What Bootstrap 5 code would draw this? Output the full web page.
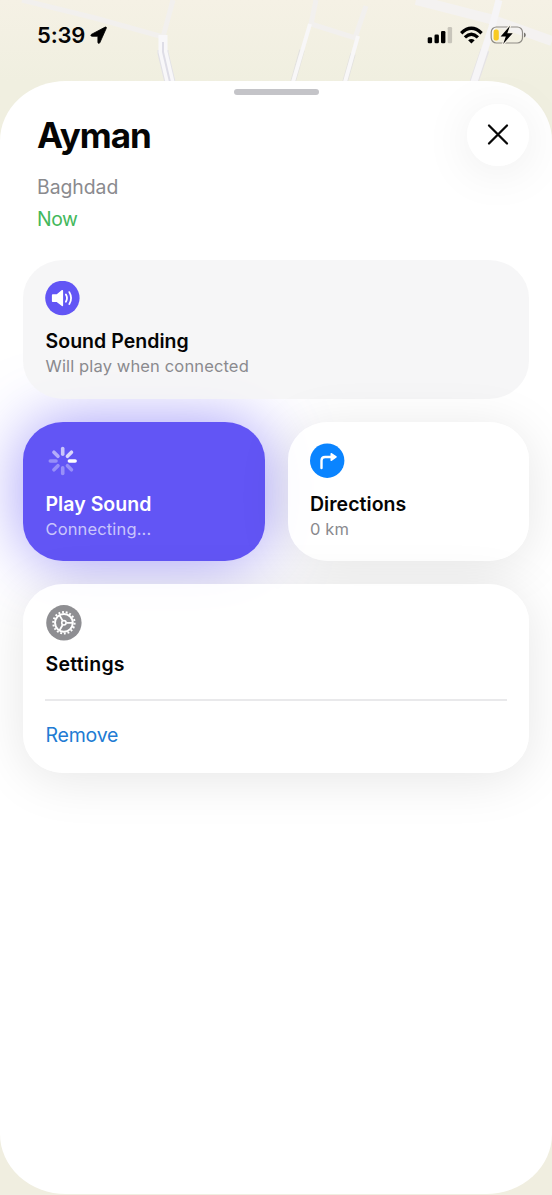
<!DOCTYPE html>
<html lang="en">
<head>
<meta charset="utf-8">
<meta name="viewport" content="width=device-width, initial-scale=1">
<title>Ayman</title>
<link href="https://cdn.jsdelivr.net/npm/bootstrap@5.3.0/dist/css/bootstrap.min.css" rel="stylesheet">
<style>
body{font-family:Inter,"Liberation Sans",sans-serif;color:#050505;background:#f0eee0;line-height:1.2}
.screen{height:1195px;background:linear-gradient(#f5f1e5,#f0efe0 81px,#f0eee0)}
.map{left:0;top:0}
.status{height:81px;padding:22px 26px 0 37px}
.clock{font-size:22px;line-height:27px;font-weight:600;letter-spacing:-.2px}
.sheet{height:1113px;border-radius:66px/60px;padding:8px 23px 0}
.grabber{width:85px;height:6px;background:#c4c4c8}
.heading{padding:9px 0 0 14px;height:165px}
.person{font-size:35px;line-height:42px;font-weight:700;letter-spacing:-1px;margin:10px 0 0}
.place,.seen{font-size:19.4px;line-height:24px;color:#8a8a8e}
.place{margin-top:19px;letter-spacing:-.05px}
.seen{margin-top:8px;color:#43b85c;letter-spacing:-.4px}
.round-x{width:62px;height:62px;background:rgba(255,255,255,.9);box-shadow:0 6px 50px rgba(0,0,0,.08)}
.tile{border:0;border-radius:40px/38px;padding:21px 22.5px 0;background:rgba(255,255,255,.86);box-shadow:0 6px 52px rgba(0,0,0,.1);z-index:1}
.tile svg{display:block;margin-left:-.5px}
.h-tile{height:139px}
.pending{background:rgba(245,245,246,.86);box-shadow:none}
.playing{background:#6255f5;box-shadow:0 0 64px rgba(98,85,245,.6);z-index:0}
.label{font-size:19.5px;line-height:24px;font-weight:600;margin-top:14px;letter-spacing:.04px}
.pending .label{margin-top:13px}
.sub{font-size:16.5px;line-height:22px;color:#8a8a8e;margin-top:2px;letter-spacing:.14px}
.playing .sub{color:#c9c5fb}
.settings{height:189px}
.settings svg{margin-left:0}
.settings .label{margin-top:11px;letter-spacing:.25px}
.rule{height:2px;background:#e9e9eb;margin:23px -.5px 22px}
.remove{font-size:19.5px;line-height:24px;color:#217bd3;letter-spacing:-.2px}
.gap-tiles{gap:23px}
</style>
</head>
<body>
<main class="screen position-relative overflow-hidden">
<svg class="map position-absolute" width="552" height="81" viewBox="0 0 552 81" fill="none" aria-hidden="true">
<g stroke="#f2f0ee" stroke-width="5"><path d="M22 0 95 18 163 37 173 0M316 0 311 24 355 38 366 6"/></g>
<path d="M163 50V53L170 82" stroke="#e2e1e6" stroke-width="11"/>
<path d="M163 35 163 52 170 82" stroke="#f8f7f9" stroke-width="9"/>
<path d="M163 42 163 52 170 82" stroke="#dedde6" stroke-width="2"/>
<g stroke="#e3e2df" stroke-width="5.5"><path d="M302 50 293 82M353 54 345 82"/></g>
<g stroke="#f8f7f8" stroke-width="4"><path d="M310 24 293 82M358 36 345 82"/></g>
<path d="M416 0 490 19 552 41" stroke="#f4f2f1" stroke-width="10"/>
<path d="M485 50 474 82" stroke="#e5e3e5" stroke-width="9"/>
<path d="M499 0 492 27 474 82" stroke="#f6f5f7" stroke-width="7"/>
</svg>
<header class="status position-relative d-flex justify-content-between align-items-start">
  <div class="d-flex"><span class="clock">5:39</span>
    <svg class="ms-1" width="20" height="27" viewBox="0 0 20 27"><path d="M17.3 6.2 10.9 20.6c-.5 1.2-2 1-2-.3v-6H3.1c-1.5 0-1.7-1.5-.4-2.1L16.2 5.1c.8-.4 1.5.2 1.1 1.1Z" stroke="#000" stroke-width=".8"/></svg>
  </div>
  <svg width="100" height="27" viewBox="426 22 100 27" aria-label="Signal, Wi-Fi, battery">
    <rect x="427.7" y="37.2" width="4.4" height="6" rx="1.3"/><rect x="434.5" y="34.5" width="4.4" height="8.7" rx="1.3"/><rect x="441" y="31" width="4.4" height="12.2" rx="1.3"/><rect x="447.7" y="27" width="4.4" height="16.2" rx="1.3" fill="#c8c5bb"/>
    <g fill="none" stroke="#000" stroke-width="3.3"><path d="M461.2 33.2Q471.4 23.4 481.6 33.2"/><path d="M464.9 37.4Q471.4 31.2 477.9 37.4"/></g><path d="M468.1 40.2q3.3-2.6 6.6 0L471.4 43.5Z"/>
    <rect x="491.2" y="27" width="31.3" height="16" rx="5.2" fill="none" stroke="#8f8c86" stroke-width="1.2"/>
    <rect x="493.6" y="29.5" width="5.2" height="11" rx="2.2" fill="#f8ca22"/>
    <path d="M524 32.5q1.8.6 1.8 2.5T524 37.5Z" fill="#77756f"/>
    <path d="M510 25.8 500.6 36.5h5.2L503.2 44 512.7 33.2h-5.4Z" stroke="#f5f1e7" stroke-width="2.3" paint-order="stroke" stroke-linejoin="round"/>
  </svg>
</header>
<section class="sheet position-relative bg-white">
  <div class="grabber rounded-pill mx-auto"></div>
  <div class="heading d-flex justify-content-between align-items-start">
    <div><h1 class="person">Ayman</h1><div class="place">Baghdad</div><div class="seen">Now</div></div>
    <button class="round-x btn border-0 rounded-circle p-0 d-flex align-items-center justify-content-center" aria-label="Close">
      <svg width="24" height="24" viewBox="0 0 24 24" fill="none" stroke="#080808" stroke-width="2.3" stroke-linecap="round"><path d="m3 2.5 18 18M21 2.5 3 20.5"/></svg>
    </button>
  </div>
  <div class="d-flex flex-column gap-tiles">
    <article class="tile card pending h-tile">
      <svg width="35" height="35" viewBox="0 0 35 35"><circle cx="17.4" cy="17" r="17.2" fill="#6255f5"/><path d="M8 13.2h3.7l5.2-4.1c.6-.4 1.2-.1 1.2.6v14.8c0 .7-.6 1-1.2.6l-5.2-4.1H8c-.7 0-1.1-.4-1.1-1.1v-5.6c0-.7.4-1.1 1.1-1.1Z" fill="#fff"/><path d="M20.9 13.5q2.2 3.6 0 7.2M24.3 11.1q3.6 6 0 12" fill="none" stroke="#fff" stroke-width="1.8" stroke-linecap="round"/></svg>
      <div class="label">Sound Pending</div><div class="sub">Will play when connected</div>
    </article>
    <div class="row flex-nowrap g-0 gap-tiles">
      <div class="col"><article class="tile card playing h-tile text-white">
        <svg width="35" height="35" viewBox="0 0 35 35" stroke="#fff" stroke-width="3.6" stroke-linecap="round"><g transform="translate(17.7 18)"><path d="M6.7 0h5.7"/><path d="M6.7 0h5.7" transform="rotate(-45)" opacity=".77"/><path d="M6.7 0h5.7" transform="rotate(-90)" opacity=".66"/><path d="M6.7 0h5.7" transform="rotate(-135)" opacity=".52"/><path d="M6.7 0h5.7" transform="rotate(180)" opacity=".34"/><path d="M6.7 0h5.7" transform="rotate(135)" opacity=".34"/><path d="M6.7 0h5.7" transform="rotate(90)" opacity=".34"/><path d="M6.7 0h5.7" transform="rotate(45)" opacity=".34"/></g></svg>
        <div class="label">Play Sound</div><div class="sub">Connecting...</div>
      </article></div>
      <div class="col"><article class="tile card h-tile">
        <svg width="35" height="35" viewBox="0 0 35 35"><circle cx="17.2" cy="17.7" r="17.2" fill="#0a84ff"/><path d="M11.5 25v-7.4q0-3.6 3.6-3.6h6" fill="none" stroke="#fff" stroke-width="2.4" stroke-linecap="round"/><path d="m21.2 10.7 4.9 3.2-4.9 3.4Z" fill="#fff" stroke="#fff" stroke-width="1.4" stroke-linejoin="round"/></svg>
        <div class="label">Directions</div><div class="sub">0 km</div>
      </article></div>
    </div>
    <article class="tile card settings">
      <svg width="36" height="36" viewBox="0 0 36 36"><circle cx="17.9" cy="17.8" r="17.7" fill="#8e8e92"/><g transform="translate(17.9 17.8)" fill="none" stroke="#fff"><circle r="8.9" stroke-width="2"/><circle r="10.7" stroke-width="2" pathLength="36" stroke-dasharray="1 1"/><circle r="2.2" stroke-width="1.6"/><path d="M2.5 0h6M-1.3-2.2l-3-5.2M-1.3 2.2l-3 5.2" stroke-width="1.8"/></g></svg>
      <div class="label">Settings</div>
      <div class="rule"></div>
      <a class="remove text-decoration-none" href="#">Remove</a>
    </article>
  </div>
</section>
</main>
<script src="https://cdn.jsdelivr.net/npm/bootstrap@5.3.0/dist/js/bootstrap.bundle.min.js"></script>
</body>
</html>
